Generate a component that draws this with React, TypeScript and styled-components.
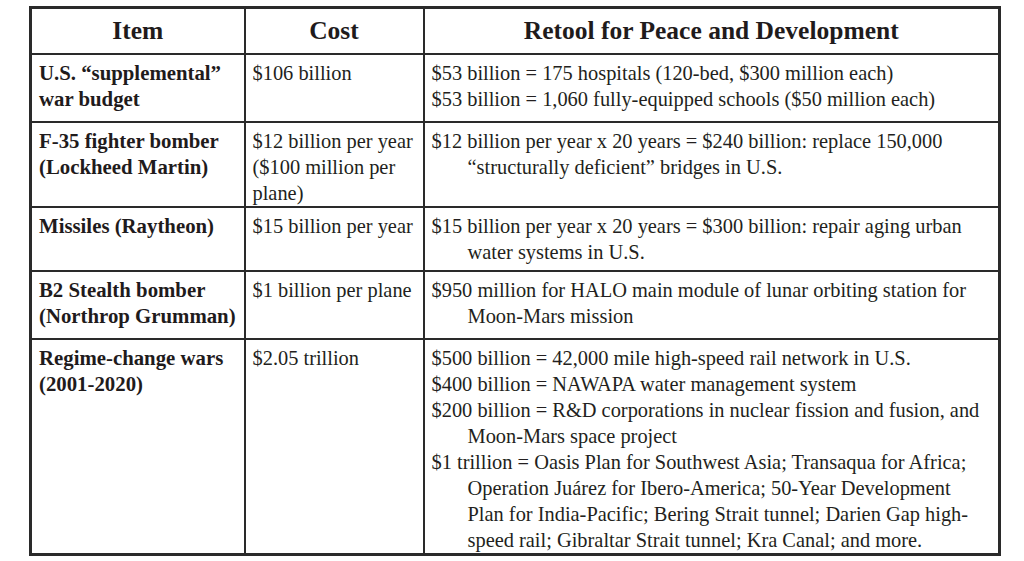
import styled, { createGlobalStyle } from 'styled-components';

const GlobalStyle = createGlobalStyle`
  html, body {
    margin: 0;
    padding: 0;
    background: #ffffff;
  }
  body {
    font-family: "Liberation Serif", "Times New Roman", serif;
    color: #231f20;
  }
`;

const Page = styled.div`
  padding: 6px 0 0 29px;
`;

const Table = styled.table`
  width: 972px;
  table-layout: fixed;
  border-collapse: collapse;
  border: 3px solid #2a2a2a;
`;

const HeadCell = styled.th`
  height: 44px;
  padding: 0;
  border: 2px solid #2a2a2a;
  font-size: 25.5px;
  font-weight: 700;
  text-align: center;
  vertical-align: middle;
  color: #1f1b1c;
`;

const Row = styled.tr<{ $height: number }>`
  height: ${(p) => p.$height}px;
`;

const Cell = styled.td`
  padding: 5px 4px 0 7px;
  border: 2px solid #2a2a2a;
  vertical-align: top;
  font-size: 20.4px;
  line-height: 26px;
`;

const ItemCell = styled(Cell)`
  font-weight: 700;
  font-size: 20.8px;
  white-space: nowrap;
  color: #1f1b1c;
`;

const PlanCell = styled(Cell)`
  padding-right: 12px;
`;

const PlanLine = styled.div`
  padding-left: 36px;
  text-indent: -36px;
`;

interface Entry {
  item: string[];
  cost: string;
  plan: string[];
  height: number;
}

const entries: Entry[] = [
  {
    item: ['U.S. “supplemental”', 'war budget'],
    cost: '$106 billion',
    plan: [
      '$53 billion = 175 hospitals (120-bed, $300 million each)',
      '$53 billion = 1,060 fully-equipped schools ($50 million each)',
    ],
    height: 68,
  },
  {
    item: ['F-35 fighter bomber', '(Lockheed Martin)'],
    cost: '$12 billion per year ($100 million per plane)',
    plan: [
      '$12 billion per year x 20 years = $240 billion: replace 150,000 “structurally deficient” bridges in U.S.',
    ],
    height: 84,
  },
  {
    item: ['Missiles (Raytheon)'],
    cost: '$15 billion per year',
    plan: [
      '$15 billion per year x 20 years = $300 billion: repair aging urban water systems in U.S.',
    ],
    height: 64,
  },
  {
    item: ['B2 Stealth bomber', '(Northrop Grumman)'],
    cost: '$1 billion per plane',
    plan: [
      '$950 million for HALO main module of lunar orbiting station for Moon-Mars mission',
    ],
    height: 68,
  },
  {
    item: ['Regime-change wars', '(2001-2020)'],
    cost: '$2.05 trillion',
    plan: [
      '$500 billion = 42,000 mile high-speed rail network in U.S.',
      '$400 billion = NAWAPA water management system',
      '$200 billion = R&D corporations in nuclear fission and fusion, and Moon-Mars space project',
      '$1 trillion = Oasis Plan for Southwest Asia; Transaqua for Africa; Operation Juárez for Ibero-America; 50-Year Development Plan for India-Pacific; Bering Strait tunnel; Darien Gap high-speed rail; Gibraltar Strait tunnel; Kra Canal; and more.',
    ],
    height: 213,
  },
];

export default function App() {
  return (
    <>
      <GlobalStyle />
      <Page>
        <Table>
          <colgroup>
            <col style={{ width: 214 }} />
            <col style={{ width: 179 }} />
            <col />
          </colgroup>
          <thead>
            <tr>
              <HeadCell>Item</HeadCell>
              <HeadCell>Cost</HeadCell>
              <HeadCell>Retool for Peace and Development</HeadCell>
            </tr>
          </thead>
          <tbody>
            {entries.map((e) => (
              <Row key={e.item[0]} $height={e.height}>
                <ItemCell>
                  {e.item.map((line) => (
                    <div key={line}>{line}</div>
                  ))}
                </ItemCell>
                <Cell>{e.cost}</Cell>
                <PlanCell>
                  {e.plan.map((line) => (
                    <PlanLine key={line}>{line}</PlanLine>
                  ))}
                </PlanCell>
              </Row>
            ))}
          </tbody>
        </Table>
      </Page>
    </>
  );
}
